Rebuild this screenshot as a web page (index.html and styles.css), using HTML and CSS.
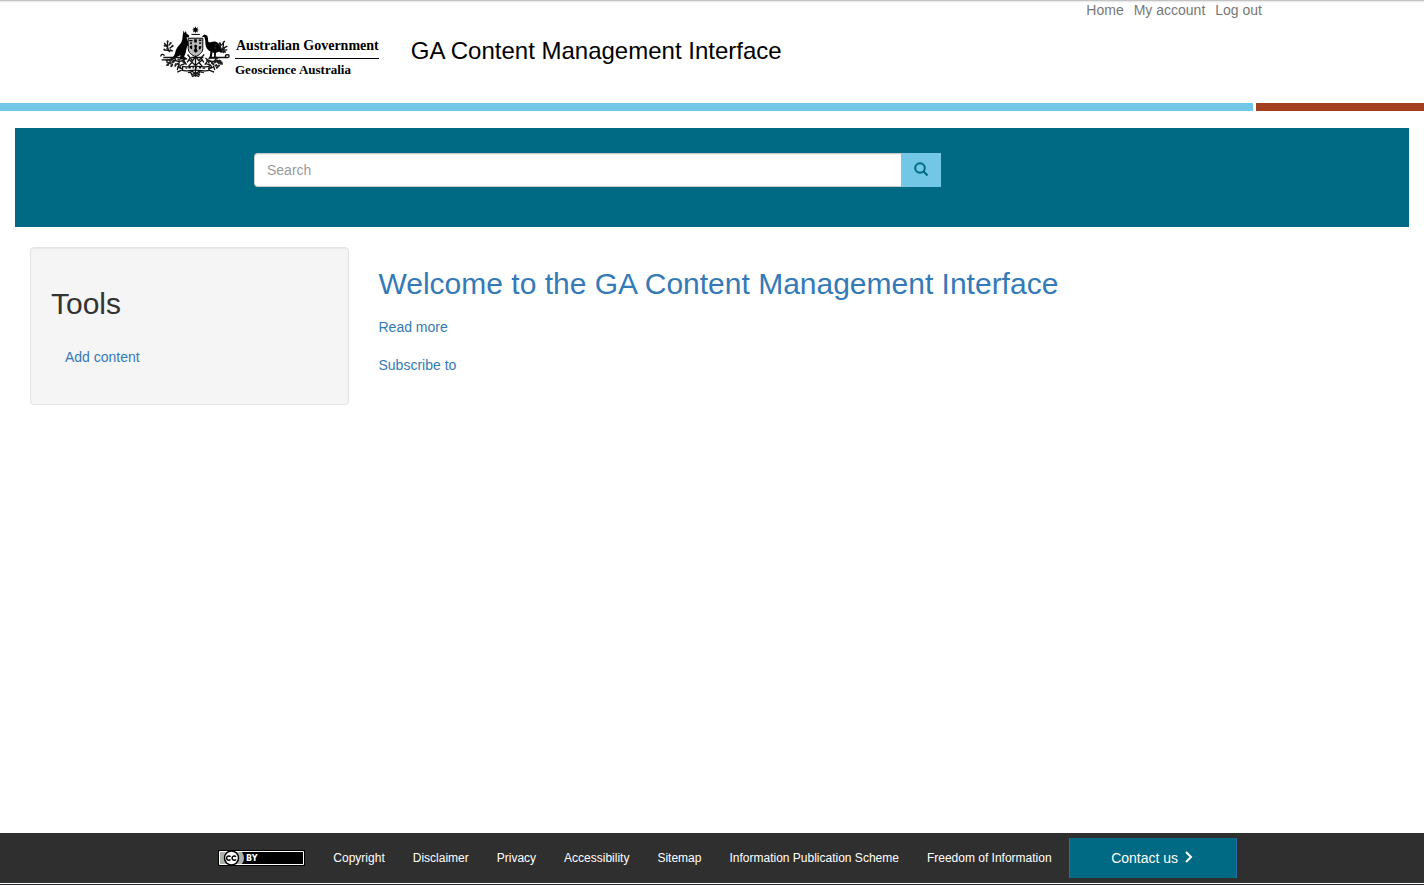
FILE: index.html
```html
<!DOCTYPE html>
<html lang="en">
<head>
<meta charset="utf-8">
<meta name="viewport" content="width=device-width, initial-scale=1">
<title>GA Content Management Interface</title>
<link rel="stylesheet" href="styles.css">
</head>
<body>
<header class="site-header">
  <div class="header-inner">
    <div class="brand">
      <div class="logo">
        <svg class="arms" viewBox="14 15 214 158" role="img" aria-label="Coat of arms">
          <path d="M121 18l2 6 6-3-3 6 6 2-6 2 3 6-6-3-2 6-2-6-6 3 3-6-6-2 6-2-3-6 6 3z"/>
          <path d="M109 41h25v3h-25z"/>
          <path d="M85 31l3 7 4-6 2 8 8 6-1 5-7 1c1 6 5 11 6 18l9 5-1 5-12-3c-1 8-4 13-4 19l-6 15 10 3v4H73l3-13-8 3c-6 7-14 12-26 13H19v-4h20c12-2 17-8 20-17 3-14 10-23 17-30 4-6 6-13 6-21z"/>
          <path d="M140 49l8-6 8 3c4 7 2 14 4 19 5 4 11-3 20-1 12 4 19 13 21 26l3 7-13-2-8 3-1 11 8 3v4h-17l4-7v-11l-5-1-2 14 5 5h-17l6-6 2-16c-9-5-14-12-15-22 0-9-1-15-3-21z"/>
          <path class="arms-shield" d="M99 54h44v31c0 13-12 20-22 25-10-5-22-12-22-25z"/>
          <path d="M102 59h10v4h-10zM105 66h5v6h-5zM117 57h8v10h-8zM131 58h8v4h-8zM132 66h6v5h-6zM103 78l8-3v12l-6-2zM117 76l4-3 5 3-2 9 4 8-7 5-6-6 4-7zM131 78h8l-3 9-5 1z"/>
          <g class="arms-line">
            <path d="M43 96c-8-10-8-19-6-33m1 18l-9-5m11 15l-13-2m16-4l9-8m-12-1l7-8m-14 9l-6-9m12 22l14 2M197 98c8-10 9-19 8-34m0 20l12-6m-15 12l15-1m-18-3l-8-8m9-2l-8-8m9 5l8-11m-6 24l9 11"/>
            <path d="M17 109c-2-7 8-9 10-2m-3 5h65m19 0h37m17 0h57c5-1 4-10-2-8-6-1-7 4-5 7"/>
            <path d="M92 113c-7 9-18 13-29 9-8-4-15 2-12 8m12-8l-5-8m15 9l-3 9m15-13l5 10M151 113c7 9 17 14 29 9 8-4 16 2 12 8m-13-8l5-8m-16 9l3 9m14-13l8 9m-28-9l-5 10"/>
            <path d="M121 106v64M97 103l15 19 9-13 10 13 16-19M101 118l20 18 22-18M88 132c-14-1-21 13-5 14M154 132c15-1 22 13 5 14M110 127l-10 11m31-11l10 11M105 113l-9 14m41-14l9 14M84 121l10 13m65-13l-10 13"/>
            <path d="M82 139c12 4 20-1 39-1s27 5 41 1v12c-14 4-22-1-41-1s-28 5-39 1zM78 145l-12-5m13 10l-13 6m99-11l12-5m-13 11l13 5M70 137l-4 13m109-13l4 13"/>
            <path d="M91 144h5m4-1h7m5 0h4m4 0h6m5 0h7m4 1h8M98 158l14-4 9 7 10-7 15 4M108 165l13-6 14 6M105 156l5 7m24-7l-5 7M110 170l11-5 11 5"/>
          </g>
          <g class="arms-leaf">
            <path d="M37 63v1m-9 12v1m-1 11v1m25-12v1m-6-10v1m-10 15v1m10 5v1m149-22v1m12 14v1m-1 10v1m-25-13v1m1-11v1m21 17v1m-8-16v1"/>
            <path d="M34 122l2-3m0 8l4 2m2-9l3 2m-10 13l4-1m4-7l3 3m5 4l-3 4m14-6l-2 5m9-6l2 4m-2-17l3 1m-23-1l-4 4m8 4l3-2m11 7l4 3m13-9l4 4m105-8l3 2m4 4l-3 4m-9-5l3 3m-7 6l-3 2m-8-8l2 4m13 7l-3 3m-23-10l3 4m-5-16l-4 1m23 5l4-3m5 15l4-3m5-7l4 2m-22-8l4-2"/>
          </g>
        </svg>
        <div class="logo-text">
          <span class="logo-top">Australian Government</span>
          <span class="logo-bottom">Geoscience Australia</span>
        </div>
      </div>
      <div class="site-name">GA Content Management Interface</div>
    </div>
    <nav class="account" aria-label="Account">
      <a href="#">Home</a>
      <a href="#">My account</a>
      <a href="#">Log out</a>
    </nav>
  </div>
</header>
<div class="stripe"><span class="stripe-blue"></span><span class="stripe-red"></span></div>

<div class="search-band">
  <form class="search" role="search">
    <input class="search-input" type="text" placeholder="Search" aria-label="Search">
    <button class="search-button" type="button" aria-label="Search">
      <svg width="14" height="14" viewBox="0 0 14 14"><circle cx="6" cy="6" r="4.8"/><path d="M9.300 9.300l4.200 4.200"/></svg>
    </button>
  </form>
</div>

<main class="content">
  <aside class="sidebar">
    <section class="well">
      <h2 class="tools-title">Tools</h2>
      <a class="tools-link" href="#">Add content</a>
    </section>
  </aside>
  <article class="article">
    <h2 class="article-title"><a href="#">Welcome to the GA Content Management Interface</a></h2>
    <a class="article-link" href="#">Read more</a>
    <a class="article-link" href="#">Subscribe to</a>
  </article>
</main>

<footer class="site-footer">
  <svg class="cc" width="87" height="16" viewBox="0 0 87 16" role="img" aria-label="Creative Commons BY">
    <path d="M0 0h87v16H0z"/>
    <path d="M1.500 1.500h84v13h-84z" fill="#000" stroke="#fff"/>
    <path d="M2 2h22q4 6 0 12H2z" fill="#aab2ab"/>
    <circle cx="13.500" cy="8" r="7" fill="#fff" stroke="#000" stroke-width="1.500"/>
    <path d="M12.500 6.700a2.200 2.200 0 1 0 0 2.800M18 6.700a2.200 2.200 0 1 0 0 2.800" fill="none" stroke="#000" stroke-width="1.500"/>
    <text class="cc-text" x="28" y="11">BY</text>
  </svg>
  <nav class="footer-links" aria-label="Footer">
    <a href="#">Copyright</a>
    <a href="#">Disclaimer</a>
    <a href="#">Privacy</a>
    <a href="#">Accessibility</a>
    <a href="#">Sitemap</a>
    <a href="#">Information Publication Scheme</a>
    <a href="#">Freedom of Information</a>
  </nav>
  <a class="contact" href="#">Contact us
    <svg width="10" height="14" viewBox="0 0 10 14"><path d="M2 1L7 6 2 11"/></svg>
  </a>
</footer>
</body>
</html>
```
FILE: styles.css
```css
* { box-sizing: border-box; }

body {
  margin: 0;
  min-height: 100vh;
  display: flex;
  flex-direction: column;
  background: #fff;
  color: #333;
  font: 14px/20px "Liberation Sans", Arial, sans-serif;
}

a { color: #337ab7; text-decoration: none; }
h2 { margin: 0; font-size: 30px; line-height: 33px; font-weight: 400; }

.site-header { background: linear-gradient(#c4c4c4 1px, #e4e4e4 1px, #fff 3px); }
.header-inner {
  display: flex;
  justify-content: space-between;
  width: 100%;
  max-width: 1104px;
  height: 103px;
  margin: 0 auto;
}
.brand { display: flex; align-items: flex-start; gap: 32px; padding-top: 25px; }
.logo { display: flex; gap: 4px; color: #000; }
.arms { width: 71px; height: 53px; }
.arms-shield { fill: #bbb; stroke: #000; stroke-width: 3; }
.arms-line { fill: none; stroke: #111; stroke-width: 4; }
.arms-leaf { fill: none; stroke: #222; stroke-width: 6; stroke-linecap: round; }
.logo-text {
  display: flex;
  flex-direction: column;
  padding-top: 9px;
  font: bold 14px/20px "Liberation Serif", "Times New Roman", serif;
  white-space: nowrap;
}
.logo-top { padding: 2px 0 2px 1px; border-bottom: 1px solid #000; }
.logo-bottom { padding-top: 1px; font-size: 13px; }
.site-name { padding-top: 9px; font-size: 24px; line-height: 34px; color: #000; }
.account { display: flex; gap: 10px; padding-right: 2px; }
.account a { color: #777; }

.stripe { display: grid; grid-template-columns: 88% 1fr; column-gap: 3px; height: 8px; }
.stripe-blue { background: #72c7e7; }
.stripe-red { background: #a33f1f; }

.search-band {
  display: grid;
  grid-template-columns: 239fr 687fr 468fr;
  margin: 17px 15px 0;
  padding: 25px 0 40px;
  background: #006983;
}
.search { grid-column: 2; display: flex; }
.search-input {
  flex: 1;
  min-width: 0;
  height: 34px;
  padding: 6px 12px;
  border: 1px solid #ccc;
  border-right: 0;
  border-radius: 4px 0 0 4px;
  box-shadow: inset 0 1px 1px rgba(0, 0, 0, .075);
  font: inherit;
}
.search-input::placeholder { color: #999; }
.search-button {
  width: 40px;
  height: 34px;
  padding: 0;
  border: 0;
  background: #72c7e7;
}
.search-button svg { fill: none; stroke: #006983; stroke-width: 2; }

.content { flex: 1; display: flex; align-items: flex-start; padding: 20px 15px; }
.sidebar { flex: 0 0 25%; padding: 0 15px; }
.well {
  padding: 39px 20px 37px;
  border: 1px solid #e3e3e3;
  border-radius: 4px;
  background: #f5f5f5;
  box-shadow: inset 0 1px 1px rgba(0, 0, 0, .05);
}
.tools-link { display: block; padding: 27px 14px 0; line-height: 20px; }
.article { flex: 1; padding: 20px 15px 0; }
.article-link { display: block; margin-bottom: 18px; }
.article-title { margin-bottom: 17px; }

.site-footer {
  display: flex;
  align-items: center;
  justify-content: center;
  height: 52px;
  padding: 0 0 2px 31px;
  background: linear-gradient(#2f2f2f 50px, #fff 50px, #fff 51px, #20262b 51px);
}
.cc { flex: none; margin-right: 28px; }
.cc-text { fill: #fff; font: bold 8px "DejaVu Sans", sans-serif; }
.footer-links { display: flex; gap: 28px; margin-right: 17px; font-size: 12px; white-space: nowrap; }
.footer-links a { color: #fff; }
.contact {
  display: flex;
  align-items: center;
  justify-content: center;
  gap: 6px;
  width: 168px;
  height: 40px;
  border: solid #2e6da4;
  border-width: 0 1px;
  background: #006983;
  color: #fff;
}
.contact svg { fill: none; stroke: #fff; stroke-width: 2; }
```
